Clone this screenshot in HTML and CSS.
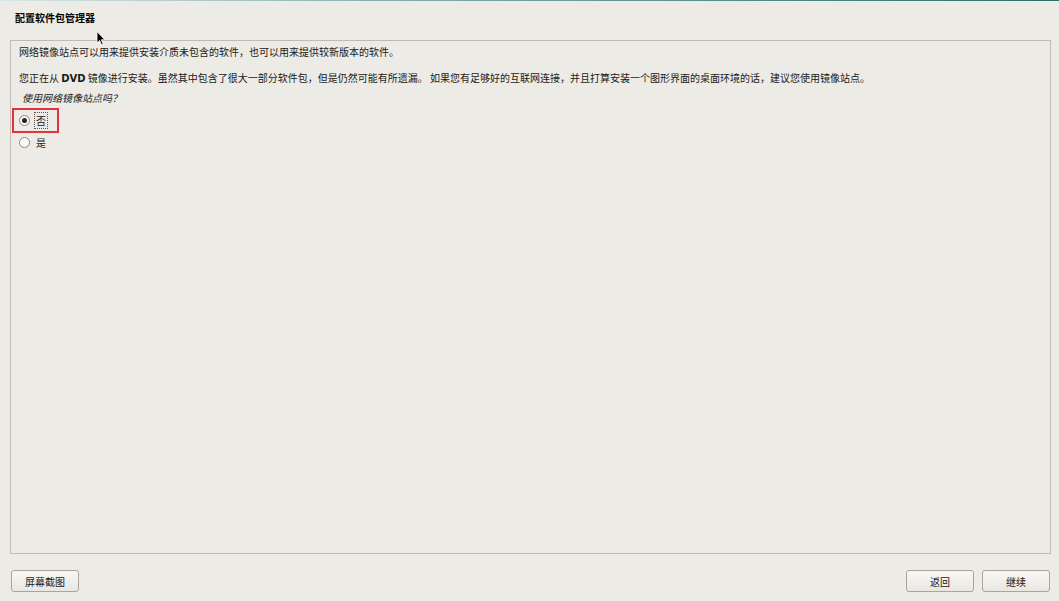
FILE: index.html
```html
<!DOCTYPE html>
<html lang="zh-CN">
<head>
<meta charset="utf-8">
<title>配置软件包管理器</title>
<link rel="stylesheet" href="styles.css">
</head>
<body>
<div class="topline"></div>
<header class="header"><h1 class="title">配置软件包管理器</h1></header>
<main class="panel">
  <p class="line first">网络镜像站点可以用来提供安装介质未包含的软件，也可以用来提供较新版本的软件。</p>
  <p class="line second">您正在从 <b>DVD</b> 镜像进行安装。虽然其中包含了很大一部分软件包，但是仍然可能有所遗漏。 如果您有足够好的互联网连接，并且打算安装一个图形界面的桌面环境的话，建议您使用镜像站点。</p>
  <p class="question">使用网络镜像站点吗？</p>
  <div class="options">
    <label class="option selected"><span class="radio checked"></span><span class="opt-text focus">否</span></label>
    <label class="option"><span class="radio"></span><span class="opt-text">是</span></label>
  </div>
</main>
<footer class="footer">
  <button class="btn">屏幕截图</button>
  <div class="right">
    <button class="btn">返回</button>
    <button class="btn">继续</button>
  </div>
</footer>
<svg class="cursor" width="10" height="15" viewBox="0 0 10 15"><path d="M1 0.5 L1 12 L3.6 9.4 L5.6 13.8 L7.2 13.1 L5.3 8.8 L8.8 8.8 Z" fill="#000" stroke="#fff" stroke-width="0.8"/></svg>
</body>
</html>
```
FILE: styles.css
```css
html, body {
  margin: 0;
  padding: 0;
}
body {
  width: 1059px;
  height: 601px;
  background: #edebe5;
  font-family: "DejaVu Sans", "Noto Sans CJK SC", sans-serif;
  font-size: 10px;
  color: #1a1a1a;
  display: flex;
  flex-direction: column;
  position: relative;
  overflow: hidden;
}
.topline {
  height: 1px;
  background: linear-gradient(to right, #d6e6e6 0%, #7fa9a5 40%, #2d6e68 100%);
  flex: none;
}
.header {
  height: 39px;
  flex: none;
  padding-left: 15px;
  display: flex;
  align-items: flex-start;
}
.title {
  margin: 10px 0 0;
  font-size: 10px;
  font-weight: bold;
  line-height: 14px;
  color: #000;
  font-family: "Noto Sans CJK SC", sans-serif;
}
.panel {
  flex: none;
  height: 514px;
  box-sizing: border-box;
  margin: 0 8px 0 10px;
  border: 1px solid #bebbb4;
  padding: 4px 8px 0;
  display: flex;
  flex-direction: column;
}
.line {
  margin: 0;
  line-height: 14px;
  font-family: "Noto Sans CJK SC", sans-serif;
}
.line b {
  font-family: "DejaVu Sans", sans-serif;
  font-weight: bold;
}
.second {
  margin-top: 12px;
}
.question {
  margin: 5px 0 0 3px;
  line-height: 14px;
  font-style: italic;
  font-family: "Noto Sans CJK SC", sans-serif;
}
.options {
  display: flex;
  flex-direction: column;
  margin-top: 3px;
  margin-left: -7px;
}
.option {
  display: flex;
  align-items: center;
  height: 23px;
  padding-left: 7px;
  box-sizing: border-box;
  width: 47px;
  gap: 4px;
  font-family: "Noto Sans CJK SC", sans-serif;
}
.option.selected {
  border: 2px solid #e2323a;
  padding-left: 5px;
  height: 25px;
  margin-bottom: -2px;
}
.radio {
  width: 9px;
  height: 9px;
  border: 1px solid #8a8882;
  border-radius: 50%;
  background: #fbfaf8;
  position: relative;
  flex: none;
}
.radio.checked::after {
  content: "";
  position: absolute;
  left: 2px;
  top: 2px;
  width: 5px;
  height: 5px;
  border-radius: 50%;
  background: #222;
}
.opt-text {
  padding: 1px 1px;
  line-height: 13px;
  border: 1px dotted transparent;
}
.opt-text.focus {
  border-color: #555;
}
.footer {
  flex: none;
  display: flex;
  justify-content: space-between;
  padding: 16px 9px 0 11px;
}
.right {
  display: flex;
  gap: 8px;
}
.btn {
  width: 68px;
  height: 22px;
  box-sizing: border-box;
  border: 1px solid #a8a59e;
  border-radius: 3px;
  background: linear-gradient(#f8f7f4, #e9e7e1);
  font-family: "Noto Sans CJK SC", sans-serif;
  font-size: 10px;
  color: #1a1a1a;
  padding: 0;
}
.cursor {
  position: absolute;
  left: 96px;
  top: 31px;
}
```
